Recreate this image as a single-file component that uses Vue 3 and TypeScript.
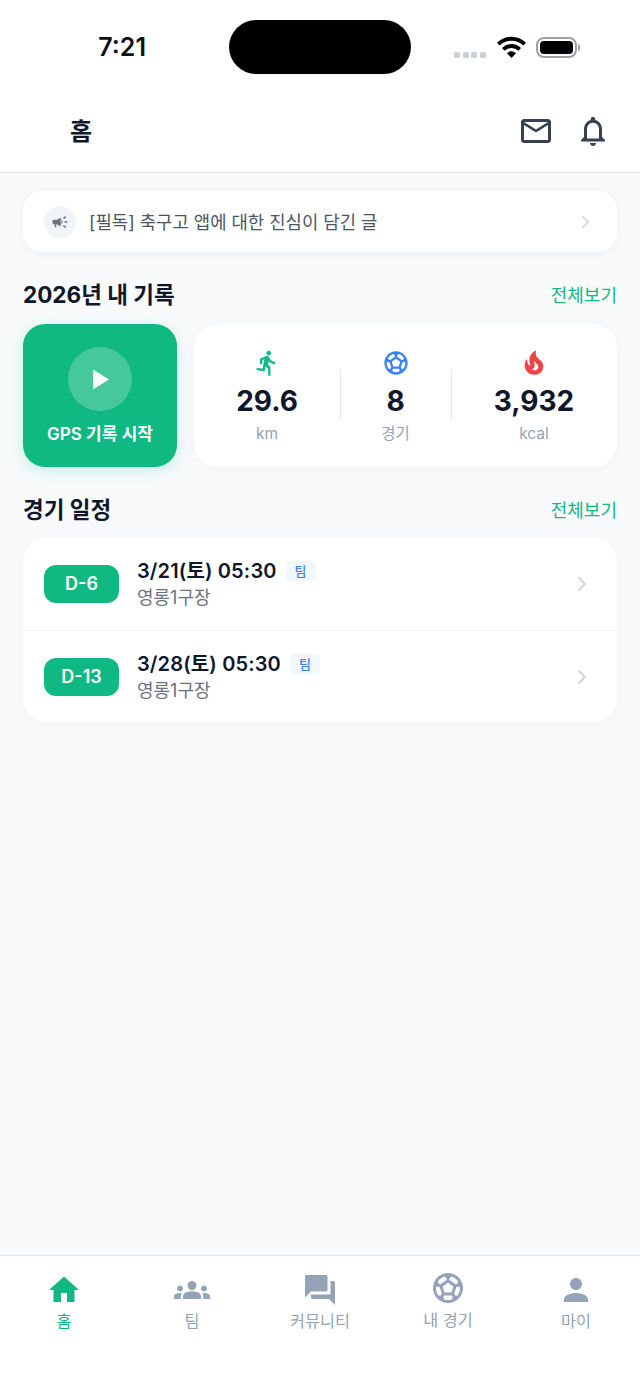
<script setup lang="ts">
interface Stat {
  value: string
  unit: string
  path: string
  color: string
}

interface Match {
  dday: string
  when: string
  place: string
}

interface Tab {
  label: string
  path: string
  active?: boolean
  ball?: boolean
}

const soccer = 'M12 2C6.48 2 2 6.48 2 12s4.48 10 10 10 10-4.48 10-10S17.52 2 12 2zm1 3.3 1.35-.95c1.82.56 3.37 1.76 4.38 3.34l-.39 1.34-1.35.46L13 6.7V5.3zm-3.35-.95L11 5.3v1.4L7.01 9.49l-1.35-.46-.39-1.34c1.01-1.57 2.56-2.77 4.38-3.34zM7.08 17.11l-1.14.1C4.73 15.81 4 13.99 4 12c0-.12.01-.23.02-.35l1-.73 1.38.48 1.46 4.34-.78 1.37zm7.42 2.48c-.79.26-1.63.41-2.5.41s-1.71-.15-2.5-.41l-.69-1.49.64-1.1h5.11l.64 1.11-.7 1.48zM14.27 15H9.73l-1.35-4.02L12 8.44l3.63 2.54L14.27 15zm3.79 2.21-1.14-.1-.79-1.37 1.46-4.34 1.39-.47 1 .73c.01.11.02.22.02.34 0 1.99-.73 3.81-1.94 5.21z'

const stats: Stat[] = [
  {
    value: '29.6',
    unit: 'km',
    color: '#10b981',
    path: 'M13.49 5.48c1.1 0 2-.9 2-2s-.9-2-2-2-2 .9-2 2 .9 2 2 2zm-3.6 13.9l1-4.4 2.1 2v6h2v-7.5l-2.1-2 .6-3c1.3 1.5 3.3 2.5 5.5 2.5v-2c-1.9 0-3.5-1-4.3-2.4l-1-1.6c-.4-.6-1-1-1.7-1-.3 0-.5.1-.8.1l-5.2 2.2v4.7h2v-3.4l1.8-.7-1.6 8.1-4.9-1-.4 2 7 1.4z'
  },
  { value: '8', unit: '경기', color: '#3b82f6', path: soccer },
  {
    value: '3,932',
    unit: 'kcal',
    color: '#ef4444',
    path: 'M19.48 12.35c-1.57-4.08-7.16-4.3-5.81-10.23.1-.44-.37-.78-.75-.55C9.29 3.71 6.68 8 8.87 13.62c.18.46-.36.89-.75.59-1.81-1.37-2-3.34-1.84-4.75.06-.52-.62-.77-.91-.34C4.69 10.16 4 11.84 4 14.37c.38 5.6 5.11 7.32 6.81 7.54 2.43.31 5.06-.14 6.95-1.87 2.08-1.93 2.84-5.01 1.72-7.69zm-9.28 5.03c1.44-.35 2.18-1.39 2.38-2.31.33-1.43-.96-2.83-.09-5.09.33 1.87 3.27 3.04 3.27 5.08.08 2.53-2.66 4.7-5.56 2.32z'
  }
]

const matches: Match[] = [
  { dday: 'D-6', when: '3/21(토) 05:30', place: '영롱1구장' },
  { dday: 'D-13', when: '3/28(토) 05:30', place: '영롱1구장' }
]

const tabs: Tab[] = [
  { label: '홈', active: true, path: 'M10 20v-6h4v6h5v-8h3L12 3 2 12h3v8z' },
  {
    label: '팀',
    path: 'M12 12.75c1.63 0 3.07.39 4.24.9 1.08.48 1.76 1.56 1.76 2.73V18H6v-1.61c0-1.18.68-2.26 1.76-2.73 1.17-.52 2.61-.91 4.24-.91zM4 13c1.1 0 2-.9 2-2s-.9-2-2-2-2 .9-2 2 .9 2 2 2zm1.13 1.1c-.37-.06-.74-.1-1.13-.1-.99 0-1.93.21-2.78.58C.48 14.9 0 15.62 0 16.43V18h4.5v-1.61c0-.83.23-1.61.63-2.29zM20 13c1.1 0 2-.9 2-2s-.9-2-2-2-2 .9-2 2 .9 2 2 2zm4 3.43c0-.81-.48-1.53-1.22-1.85-.85-.37-1.79-.58-2.78-.58-.39 0-.76.04-1.13.1.4.68.63 1.46.63 2.29V18H24v-1.57zM12 6c1.66 0 3 1.34 3 3s-1.34 3-3 3-3-1.34-3-3 1.34-3 3-3z'
  },
  {
    label: '커뮤니티',
    path: 'M21 6h-2v9H6v2c0 .55.45 1 1 1h11l4 4V7c0-.55-.45-1-1-1zm-4 6V3c0-.55-.45-1-1-1H3c-.55 0-1 .45-1 1v14l4-4h10c.55 0 1-.45 1-1z'
  },
  { label: '내 경기', path: soccer, ball: true },
  {
    label: '마이',
    path: 'M12 12c2.21 0 4-1.79 4-4s-1.79-4-4-4-4 1.79-4 4 1.79 4 4 4zm0 2c-2.67 0-8 1.34-8 4v2h16v-2c0-2.66-5.33-4-8-4z'
  }
]
</script>

<template>
  <div class="screen">
    <div class="status-bar">
      <span class="time">7:21</span>
      <div class="island"></div>
      <div class="status-icons">
        <div class="signal">
          <i v-for="n in 4" :key="n"></i>
        </div>
        <svg class="wifi" viewBox="0 0 29 22" fill="#000">
          <path d="M14.5 22 10 17.2a6.4 6.4 0 0 1 9 0Z" />
          <path d="M7.6 14.8 5 12a13.4 13.4 0 0 1 19 0l-2.6 2.8a9.8 9.8 0 0 0-13.8 0Z" />
          <path d="M2.7 9.6 0 6.7a20.6 20.6 0 0 1 29 0l-2.7 2.9a16.8 16.8 0 0 0-23.6 0Z" />
        </svg>
        <div class="battery">
          <div class="battery-body"><div class="battery-fill"></div></div>
          <div class="battery-cap"></div>
        </div>
      </div>
    </div>

    <header class="app-header">
      <h1>홈</h1>
      <div class="header-actions">
        <svg viewBox="0 0 24 24" fill="#374151">
          <path d="M20 4H4c-1.1 0-1.99.9-1.99 2L2 18c0 1.1.9 2 2 2h16c1.1 0 2-.9 2-2V6c0-1.1-.9-2-2-2zm0 14H4V8l8 5 8-5v10zm-8-7L4 6h16l-8 5z" />
        </svg>
        <svg viewBox="0 0 24 24" fill="#374151">
          <path d="M12 22c1.1 0 2-.9 2-2h-4c0 1.1.9 2 2 2zm6-6v-5c0-3.07-1.63-5.64-4.5-6.32V4c0-.83-.67-1.5-1.5-1.5s-1.5.67-1.5 1.5v.68C7.64 5.36 6 7.92 6 11v5l-2 2v1h16v-1l-2-2zm-2 1H8v-6c0-2.48 1.51-4.5 4-4.5s4 2.02 4 4.5v6z" />
        </svg>
      </div>
    </header>

    <main class="content">
      <div class="notice">
        <div class="notice-icon">
          <svg viewBox="0 0 24 24" fill="#6b7280">
            <path d="M18 11v2h4v-2h-4zm-2 6.61c.96.71 2.21 1.65 3.2 2.39.4-.53.8-1.07 1.2-1.6-.99-.74-2.24-1.68-3.2-2.4-.4.54-.8 1.08-1.2 1.61zM20.4 5.6c-.4-.53-.8-1.07-1.2-1.6-.99.74-2.24 1.68-3.2 2.4.4.53.8 1.07 1.2 1.6.96-.72 2.21-1.65 3.2-2.4zM4 9c-1.1 0-2 .9-2 2v2c0 1.1.9 2 2 2h1v4h2v-4h1l5 3V6L8 9H4zm11.5 3c0-1.33-.58-2.53-1.5-3.35v6.69c.92-.81 1.5-2.01 1.5-3.34z" />
          </svg>
        </div>
        <span class="notice-text">[필독] 축구고 앱에 대한 진심이 담긴 글</span>
        <svg class="chevron chevron--small" viewBox="0 0 10 16" fill="none">
          <path d="M2 2l6 6-6 6" />
        </svg>
      </div>

      <div class="section-head">
        <h2>2026년 내 기록</h2>
        <span class="see-all">전체보기</span>
      </div>

      <div class="records">
        <div class="gps-card">
          <div class="play-circle">
            <svg viewBox="0 0 18 20" fill="#fff"><path d="M1 0l16 10L1 20z" /></svg>
          </div>
          <span>GPS 기록 시작</span>
        </div>
        <div class="stats-card">
          <div v-for="stat in stats" :key="stat.unit" class="stat">
            <svg viewBox="0 0 24 24" :style="{ fill: stat.color }"><path :d="stat.path" /></svg>
            <strong>{{ stat.value }}</strong>
            <span>{{ stat.unit }}</span>
          </div>
        </div>
      </div>

      <div class="section-head">
        <h2>경기 일정</h2>
        <span class="see-all">전체보기</span>
      </div>

      <div class="match-list">
        <div v-for="match in matches" :key="match.dday" class="match">
          <div class="dday">{{ match.dday }}</div>
          <div class="match-info">
            <div class="match-when">
              <span>{{ match.when }}</span>
              <em>팀</em>
            </div>
            <div class="match-place">{{ match.place }}</div>
          </div>
          <svg class="chevron" viewBox="0 0 10 16" fill="none">
            <path d="M2 2l6 6-6 6" />
          </svg>
        </div>
      </div>
    </main>

    <nav class="tab-bar">
      <div
        v-for="tab in tabs"
        :key="tab.label"
        :class="['tab', { 'tab--active': tab.active, 'tab--ball': tab.ball }]"
      >
        <svg viewBox="0 0 24 24"><path :d="tab.path" /></svg>
        <span>{{ tab.label }}</span>
      </div>
    </nav>
  </div>
</template>

<style scoped>
.screen {
  display: flex;
  flex-direction: column;
  height: 1391px;
  background: #f8fafc;
  font-family: Inter, "Noto Sans CJK KR", sans-serif;
  color: #0f172a;
}

.status-bar {
  display: grid;
  grid-template-columns: 229px 182px 1fr;
  height: 92px;
  padding-top: 20px;
  box-sizing: border-box;
  background: #fff;
}

.time {
  padding-top: 13px;
  font-size: 25px;
  line-height: 28px;
  font-weight: 600;
  text-align: right;
  width: 146px;
  color: #0b0f19;
}

.island {
  height: 54px;
  border-radius: 27px;
  background: #000;
}

.status-icons {
  display: flex;
  align-items: flex-start;
  padding-left: 43px;
}

.signal {
  display: flex;
  gap: 2.6px;
  margin-top: 32px;
}

.signal i {
  width: 6px;
  height: 6px;
  border-radius: 1.5px;
  background: #cbd0d6;
}

.wifi {
  width: 29px;
  height: 22px;
  margin: 16px 0 0 11px;
}

.battery {
  display: flex;
  align-items: center;
  margin: 17px 0 0 10px;
}

.battery-body {
  width: 41px;
  height: 21px;
  padding: 2px;
  box-sizing: border-box;
  border: 2px solid #9aa1ad;
  border-radius: 8px;
}

.battery-fill {
  height: 100%;
  border-radius: 4px;
  background: #000;
}

.battery-cap {
  width: 2px;
  height: 7px;
  margin-left: 1px;
  border-radius: 0 2px 2px 0;
  background: #9aa1ad;
}

.app-header {
  display: flex;
  align-items: center;
  justify-content: space-between;
  height: 81px;
  box-sizing: border-box;
  padding: 0 29px 0 70px;
  background: #fff;
  border-bottom: 1px solid #e2e8f0;
}

.app-header h1 {
  margin: 0;
  font-size: 24px;
  line-height: 32px;
  font-weight: 700;
  color: #111827;
}

.header-actions {
  display: flex;
  align-items: center;
  gap: 21px;
}

.header-actions svg {
  width: 36px;
  height: 36px;
  margin-bottom: 2px;
}

.content {
  flex: 1;
  padding: 18px 23px 0;
}

.notice {
  display: flex;
  align-items: center;
  height: 61px;
  padding: 0 21px;
  box-sizing: border-box;
  border-radius: 20px;
  background: #fff;
  box-shadow: 0 2px 12px rgba(15, 23, 42, 0.05);
}

.notice-icon {
  display: flex;
  align-items: center;
  justify-content: center;
  width: 32px;
  height: 32px;
  border-radius: 50%;
  background: #f1f5f9;
}

.notice-icon svg {
  width: 18px;
  height: 18px;
}

.notice-text {
  flex: 1;
  margin-left: 13px;
  margin-bottom: 2px;
  font-size: 17.8px;
  color: #4b5563;
}

.chevron {
  width: 10px;
  height: 16px;
  stroke: #d1d5db;
  stroke-width: 2;
  stroke-linecap: round;
  stroke-linejoin: round;
}

.chevron--small {
  width: 9px;
  height: 14px;
  margin-right: 6px;
}

.section-head {
  display: flex;
  align-items: center;
  justify-content: space-between;
  height: 32px;
  margin-top: 26px;
}

.section-head h2 {
  margin: 0;
  padding-top: 2px;
  font-size: 22.5px;
  line-height: 32px;
  font-weight: 700;
  color: #0f172a;
}

.see-all {
  font-size: 18px;
  color: #10b981;
}

.records {
  display: flex;
  gap: 17px;
  margin-top: 14px;
}

.gps-card {
  display: flex;
  flex-direction: column;
  align-items: center;
  width: 154px;
  height: 143px;
  flex-shrink: 0;
  padding-top: 23px;
  box-sizing: border-box;
  border-radius: 22px;
  background: #10b981;
  box-shadow: 0 4px 16px rgba(16, 185, 129, 0.2);
}

.gps-card span {
  margin-top: 12px;
  font-size: 17px;
  line-height: 22px;
  font-weight: 600;
  color: #fff;
}

.play-circle {
  display: flex;
  align-items: center;
  justify-content: center;
  width: 64px;
  height: 64px;
  border-radius: 50%;
  background: rgba(255, 255, 255, 0.22);
}

.play-circle svg {
  width: 18px;
  height: 21px;
  margin-left: 2px;
}

.stats-card {
  flex: 1;
  display: grid;
  grid-template-columns: 146px 111px 1fr;
  height: 143px;
  border-radius: 24px;
  background: #fff;
  box-shadow: 0 2px 16px rgba(15, 23, 42, 0.04);
}

.stat {
  position: relative;
  display: flex;
  flex-direction: column;
  align-items: center;
  padding-top: 25px;
}

.stat + .stat::before {
  content: "";
  position: absolute;
  left: 0;
  top: 45px;
  width: 1px;
  height: 52px;
  background: #e2e8f0;
}

.stat svg {
  width: 28px;
  height: 28px;
}

.stat strong {
  margin-top: 6px;
  font-size: 28px;
  line-height: 36px;
  font-weight: 700;
  color: #0f172a;
}

.stat span {
  margin-top: 5px;
  font-size: 15.5px;
  line-height: 20px;
  color: #94a3b8;
}

.match-list {
  margin-top: 13px;
  border-radius: 24px;
  background: #fff;
  box-shadow: 0 2px 16px rgba(15, 23, 42, 0.03);
}

.match {
  display: flex;
  align-items: center;
  height: 92px;
  box-sizing: border-box;
  padding: 0 30px 0 21px;
}

.match + .match {
  border-top: 1px solid #f1f5f9;
}

.dday {
  width: 75px;
  height: 38px;
  border-radius: 12px;
  background: #10b981;
  color: #fff;
  font-size: 18px;
  line-height: 38px;
  font-weight: 600;
  text-align: center;
}

.match-info {
  flex: 1;
  margin-left: 18px;
}

.match-when {
  display: flex;
  align-items: center;
  gap: 9px;
  font-size: 20px;
  line-height: 26px;
  font-weight: 600;
  letter-spacing: 0.15px;
  color: #0f172a;
}

.match-when em {
  width: 30px;
  height: 20px;
  border-radius: 5px;
  background: #f1f7fb;
  color: #3b82f6;
  font-size: 13px;
  line-height: 20px;
  font-weight: 500;
  font-style: normal;
  text-align: center;
}

.match-place {
  margin-top: 2px;
  font-size: 18px;
  line-height: 24px;
  color: #6b7280;
}

.tab-bar {
  display: grid;
  grid-template-columns: repeat(5, 1fr);
  height: 136px;
  box-sizing: border-box;
  background: #fff;
  border-top: 1px solid #e2e8f0;
}

.tab {
  display: flex;
  flex-direction: column;
  align-items: center;
  padding-top: 15.5px;
  color: #94a3b8;
}

.tab svg {
  width: 36px;
  height: 36px;
  fill: currentColor;
}

.tab span {
  margin-top: 2.5px;
  font-size: 16.25px;
  line-height: 22px;
}

.tab--ball {
  padding-top: 14px;
}

.tab--ball span {
  margin-top: 3px;
}

.tab--active {
  color: #10b981;
}
</style>
